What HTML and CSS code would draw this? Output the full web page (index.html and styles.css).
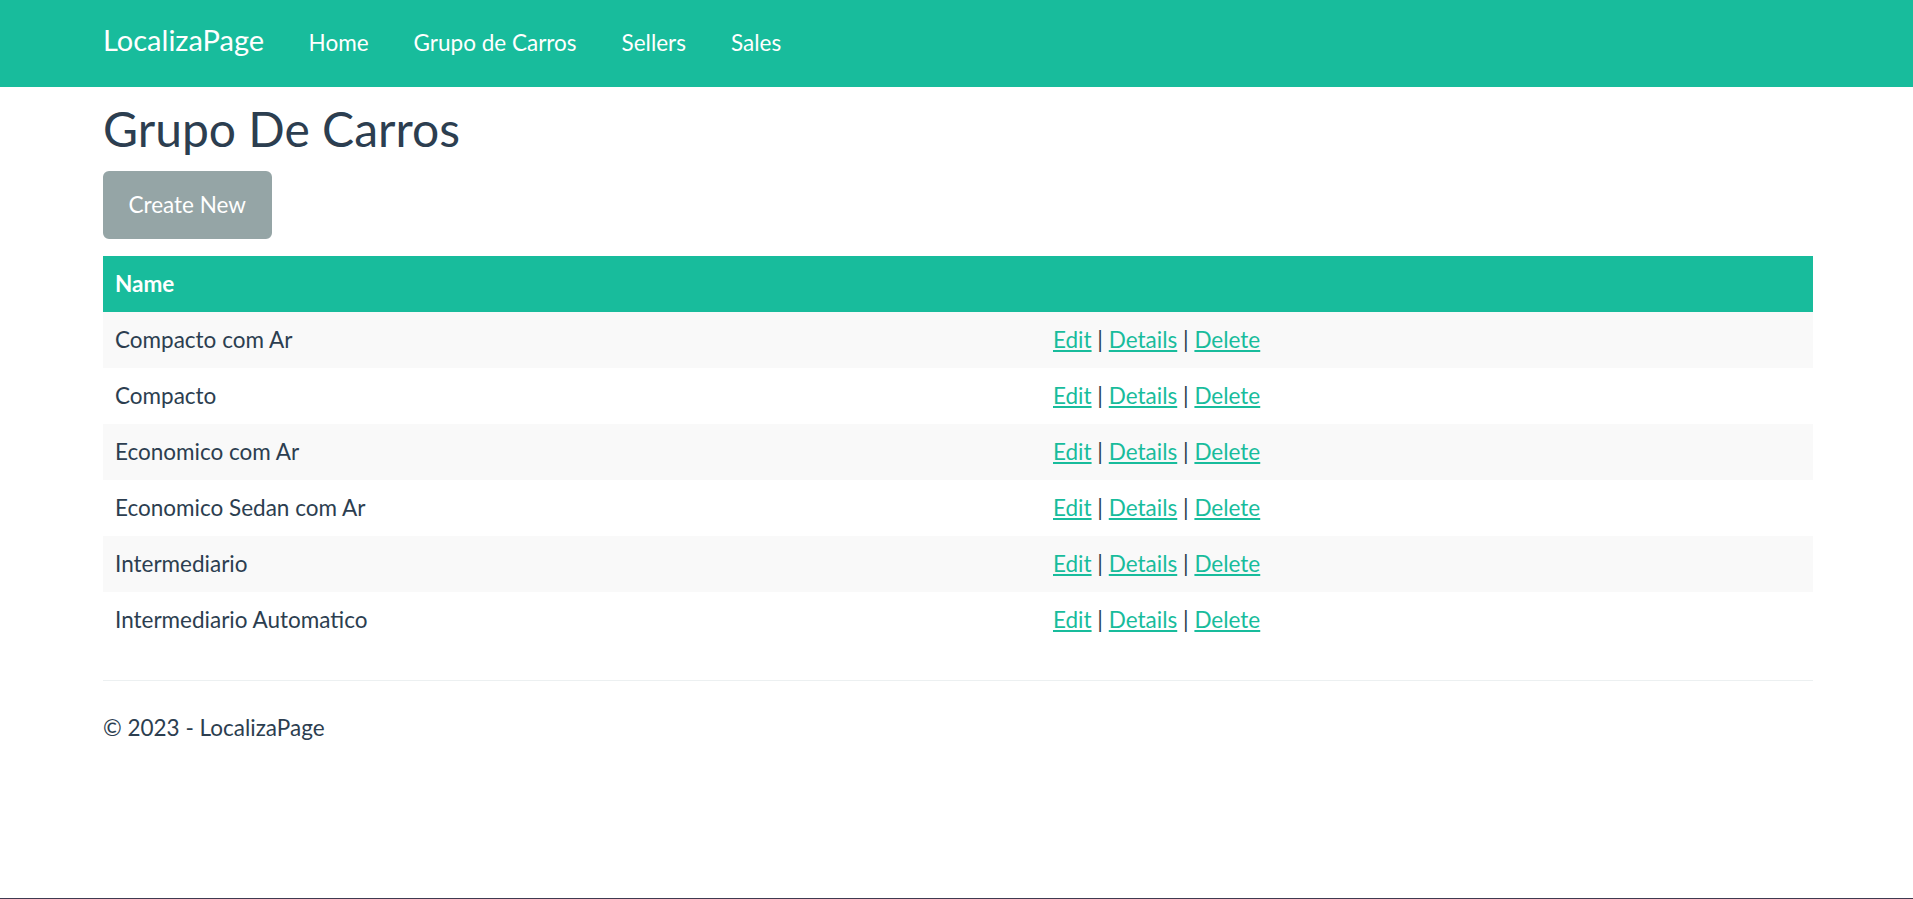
FILE: index.html
```html
<!DOCTYPE html>
<html lang="pt">
<head>
<meta charset="utf-8">
<title>Grupo De Carros - LocalizaPage</title>
<link rel="stylesheet" href="styles.css">
</head>
<body>
<header class="navbar">
  <div class="navbar-inner">
    <a class="brand" href="#">LocalizaPage</a>
    <ul class="nav">
      <li><a href="#">Home</a></li>
      <li><a href="#">Grupo de Carros</a></li>
      <li><a href="#">Sellers</a></li>
      <li><a href="#">Sales</a></li>
    </ul>
  </div>
</header>
<main class="container">
  <h2 class="page-title">Grupo De Carros</h2>
  <div class="actions"><a class="btn" href="#">Create New</a></div>
  <table class="table">
    <thead>
      <tr><th class="col-name">Name</th><th></th></tr>
    </thead>
    <tbody>
      <tr><td>Compacto com Ar</td><td><a href="#">Edit</a> | <a href="#">Details</a> | <a href="#">Delete</a></td></tr>
      <tr><td>Compacto</td><td><a href="#">Edit</a> | <a href="#">Details</a> | <a href="#">Delete</a></td></tr>
      <tr><td>Economico com Ar</td><td><a href="#">Edit</a> | <a href="#">Details</a> | <a href="#">Delete</a></td></tr>
      <tr><td>Economico Sedan com Ar</td><td><a href="#">Edit</a> | <a href="#">Details</a> | <a href="#">Delete</a></td></tr>
      <tr><td>Intermediario</td><td><a href="#">Edit</a> | <a href="#">Details</a> | <a href="#">Delete</a></td></tr>
      <tr><td>Intermediario Automatico</td><td><a href="#">Edit</a> | <a href="#">Details</a> | <a href="#">Delete</a></td></tr>
    </tbody>
  </table>
  <hr class="divider">
  <footer class="footer">
    <p>&copy; 2023 - LocalizaPage</p>
  </footer>
</main>
</body>
</html>
```
FILE: styles.css
```css
html {
  min-height: 100%;
  box-sizing: border-box;
  border-bottom: 1px solid #403a50;
  background: #fff;
}
body {
  margin: 0;
  font-family: Lato, "Noto Sans", "Liberation Sans", sans-serif;
  font-size: 22.5px;
  line-height: 32px;
  color: #2c3e50;
  background: #fff;
}
a {
  color: #18bc9c;
}
.navbar {
  background: #18bc9c;
  height: 87px;
}
.navbar-inner {
  margin-left: 103px;
  display: flex;
  align-items: baseline;
  padding-top: 24px;
}
.brand {
  color: #fff;
  text-decoration: none;
  font-size: 29px;
  line-height: 32px;
  margin-right: 22px;
}
.nav {
  list-style: none;
  margin: 0;
  padding: 0;
  display: flex;
  align-items: baseline;
}
.nav a {
  display: block;
  padding: 0 22.5px;
  color: #fff;
  text-decoration: none;
  font-size: 22.5px;
  line-height: 32px;
}
.container {
  margin-left: 103px;
  width: 1710px;
}
.page-title {
  font-size: 48px;
  line-height: 52.8px;
  font-weight: 400;
  margin: 15.7px 0 16px;
  color: #2c3e50;
}
.actions {
  display: flex;
  margin-bottom: 16.3px;
}
.btn {
  display: inline-block;
  background: #95a5a6;
  border: 3px solid #95a5a6;
  border-radius: 6px;
  padding: 15px 22.5px;
  color: #fff;
  text-decoration: none;
  font-size: 22.5px;
  line-height: 32px;
}
.table {
  width: 1710px;
  border-collapse: collapse;
  table-layout: fixed;
}
.table th,
.table td {
  padding: 12px;
  line-height: 32px;
  text-align: left;
  vertical-align: top;
}
.table th {
  background: #18bc9c;
  color: #fff;
  font-weight: 700;
}
.col-name {
  width: 914px;
}
.table tbody tr:nth-child(odd) td {
  background: #f9f9f9;
}
.divider {
  margin: 32px 0 0;
  border: 0;
  border-top: 1px solid #ecf0f1;
  height: 0;
}
.footer p {
  margin: 31px 0 0;
}
```
